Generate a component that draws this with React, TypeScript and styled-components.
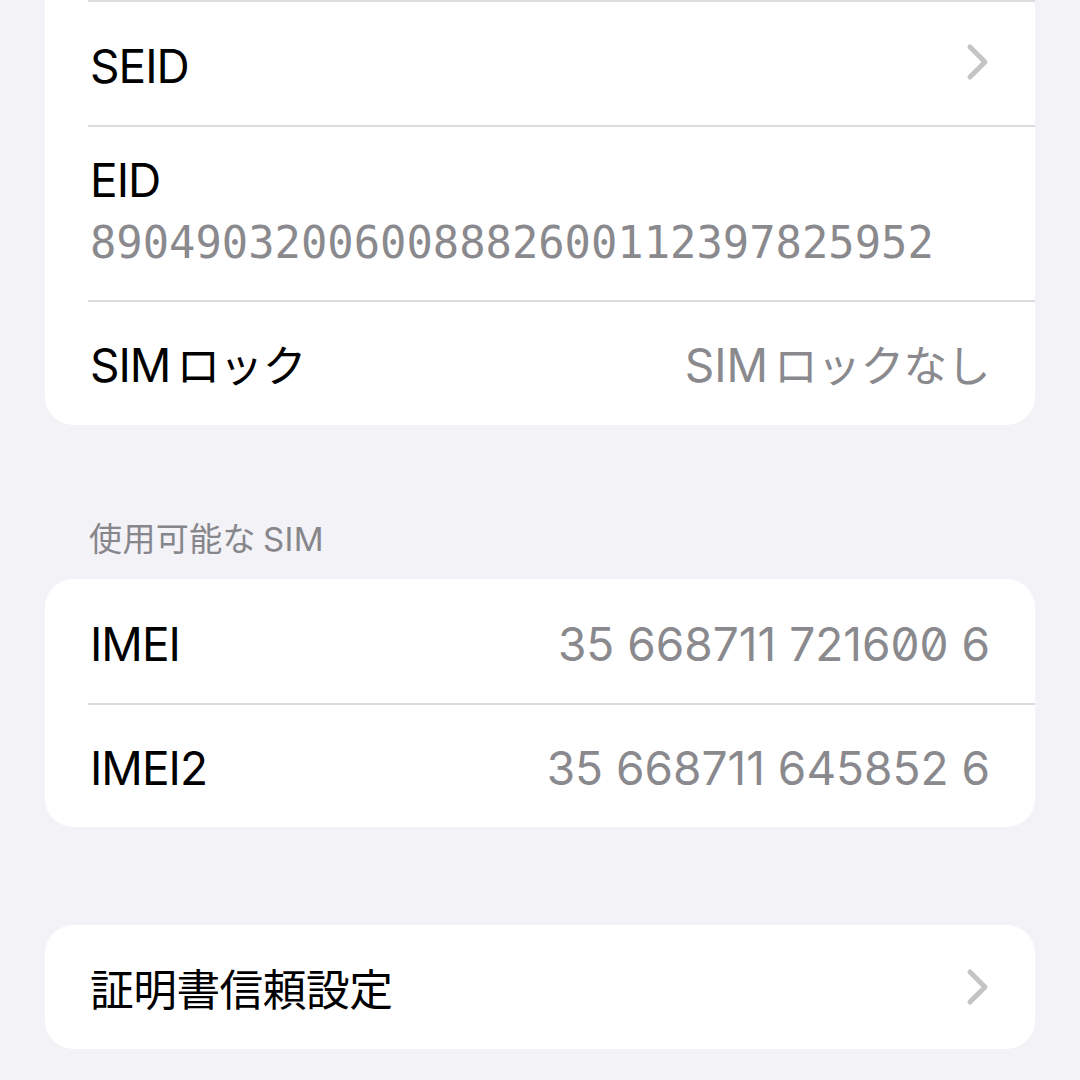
import React from "react";
import styled, { createGlobalStyle } from "styled-components";

const GlobalStyle = createGlobalStyle`
  html, body {
    margin: 0;
    padding: 0;
    background: #f2f2f7;
  }
  body {
    font-family: Inter, "Noto Sans CJK JP", sans-serif;
    -webkit-font-smoothing: antialiased;
  }
`;

const Page = styled.div`
  width: 1080px;
  height: 1080px;
  overflow: hidden;
  background: #f2f2f7;
  padding: 0 45px;
  box-sizing: border-box;
  display: flex;
  flex-direction: column;
`;

const Card = styled.div<{ $cutTop?: boolean; $gap?: number }>`
  background: #ffffff;
  border-radius: ${({ $cutTop }) => ($cutTop ? "0 0 28px 28px" : "28px")};
  margin-top: ${({ $gap }) => $gap ?? 0}px;
  overflow: hidden;
`;

const Row = styled.div<{ $rule?: boolean; $tall?: boolean }>`
  position: relative;
  min-height: ${({ $tall }) => ($tall ? 125 : 124)}px;
  padding: 6px 45px 0;
  display: flex;
  align-items: center;
  justify-content: space-between;
  box-sizing: border-box;

  ${({ $rule }) =>
    $rule &&
    `
    &::before {
      content: "";
      position: absolute;
      top: 0;
      left: 43px;
      right: 0;
      height: 2px;
      background: #dcdcdf;
    }
  `}
`;

const StackRow = styled(Row)`
  display: block;
  min-height: 175px;
  padding-top: 27px;
  padding-bottom: 0;
`;

const Label = styled.div`
  font-size: 46px;
  line-height: 56px;
  color: #000000;
  letter-spacing: -1px;
`;

const Value = styled.div<{ $zero?: boolean }>`
  font-size: 46px;
  line-height: 56px;
  color: #8a8a8e;
  letter-spacing: 0;
  font-feature-settings: ${({ $zero }) => ($zero ? '"zero" 1' : "normal")};
`;

const MonoValue = styled.div`
  font-family: "DejaVu Sans Mono", "Liberation Mono", monospace;
  font-size: 43.8px;
  line-height: 56px;
  margin-top: 7px;
  color: #8a8a8e;
`;

const Ja = styled.span<{ $lead?: boolean }>`
  font-size: 0.95em;
  letter-spacing: -0.5px;
  padding-left: ${({ $lead }) => ($lead ? "6px" : "0")};
`;

const SectionHeader = styled.div`
  margin-top: 94px;
  margin-bottom: 20px;
  padding-left: 44px;
  font-size: 33px;
  line-height: 40px;
  letter-spacing: 0.4px;
  color: #86868b;
`;

const SmallJa = styled.span<{ $gapAfter?: boolean }>`
  padding-right: ${({ $gapAfter }) => ($gapAfter ? "7px" : "0")};
`;

const ChevronIcon = styled.svg`
  display: block;
  margin-top: -7px;
`;

const Chevron: React.FC = () => (
  <ChevronIcon width="24" height="38" viewBox="0 0 24 38" aria-hidden>
    <path
      d="M4 4 L19 19 L4 34"
      fill="none"
      stroke="#c4c4c7"
      strokeWidth="5"
      strokeLinecap="round"
      strokeLinejoin="round"
    />
  </ChevronIcon>
);

const App: React.FC = () => {
  return (
    <>
      <GlobalStyle />
      <Page>
        <Card $cutTop>
          <Row $rule $tall>
            <Label>SEID</Label>
            <Chevron />
          </Row>
          <StackRow $rule>
            <Label>EID</Label>
            <MonoValue>89049032006008882600112397825952</MonoValue>
          </StackRow>
          <Row $rule $tall>
            <Label>
              SIM<Ja $lead>ロック</Ja>
            </Label>
            <Value>
              SIM<Ja $lead>ロックなし</Ja>
            </Value>
          </Row>
        </Card>

        <SectionHeader>
          <SmallJa $gapAfter>使用可能な</SmallJa>SIM
        </SectionHeader>

        <Card>
          <Row>
            <Label>IMEI</Label>
            <Value $zero>35 668711 721600 6</Value>
          </Row>
          <Row $rule>
            <Label>IMEI2</Label>
            <Value $zero>35 668711 645852 6</Value>
          </Row>
        </Card>

        <Card $gap={98}>
          <Row>
            <Label>
              <Ja>証明書信頼設定</Ja>
            </Label>
            <Chevron />
          </Row>
        </Card>
      </Page>
    </>
  );
};

export default App;
